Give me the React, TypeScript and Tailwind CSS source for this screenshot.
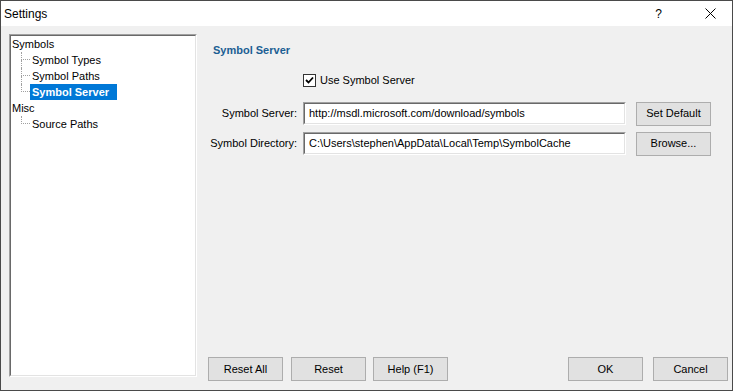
import React from "react";

const font = { fontFamily: '"Liberation Sans", Arial, sans-serif' };

function Child({ label, last, selected }: { label: string; last?: boolean; selected?: boolean }) {
  return (
    <div className="flex h-[16px] items-stretch">
      <div className="w-[10px] shrink-0" />
      <div className="flex w-[9px] shrink-0 flex-col">
        <div className="h-[8px] border-b border-l border-dotted border-[#a0a0a0]" />
        {last ? <div className="h-[8px]" /> : <div className="h-[8px] border-l border-dotted border-[#a0a0a0]" />}
      </div>
      {selected ? (
        <span className="flex h-[16px] items-center bg-[#0078d7] pl-[2px] pr-[8px] font-bold text-white">{label}</span>
      ) : (
        <span className="flex h-[16px] items-center pl-[2px]">{label}</span>
      )}
    </div>
  );
}

function Btn({ label }: { label: string }) {
  return (
    <button className="flex h-[24px] w-[75px] shrink-0 items-center justify-center border border-[#adadad] bg-[#e1e1e1] text-[11px] text-black">
      {label}
    </button>
  );
}

function Sunken({ children, className }: { children?: React.ReactNode; className: string }) {
  return (
    <div className={"border border-b-white border-l-[#a0a0a0] border-r-white border-t-[#a0a0a0] " + className}>
      <div className="h-full w-full border border-b-[#e3e3e3] border-l-[#696969] border-r-[#e3e3e3] border-t-[#696969] bg-white">
        {children}
      </div>
    </div>
  );
}

export default function App() {
  return (
    <div
      style={font}
      className="flex h-[391px] w-[733px] flex-col border border-[#4a4a4a] bg-[#f0f0f0] text-[11px] text-black"
    >
      <div className="flex h-[25px] shrink-0 items-center bg-white pl-[3px] text-[12px]">
        <span>Settings</span>
        <span className="ml-auto mr-[43px]">?</span>
        <svg width="11" height="11" viewBox="0 0 11 11" className="mr-[16px]">
          <path d="M0.5 0.5 L10.5 10.5 M10.5 0.5 L0.5 10.5" stroke="#000" strokeWidth="1" />
        </svg>
      </div>
      <div className="flex min-h-0 flex-1 pl-[8px] pt-[8px]">
        <Sunken className="mb-[13px] h-[343px] w-[188px] shrink-0">
          <div className="flex flex-col">
            <div className="flex h-[16px] items-center pl-[1px]">Symbols</div>
            <Child label="Symbol Types" />
            <Child label="Symbol Paths" />
            <Child label="Symbol Server" last selected />
            <div className="flex h-[16px] items-center pl-[1px]">Misc</div>
            <Child label="Source Paths" last />
          </div>
        </Sunken>
        <div className="flex min-w-0 flex-1 flex-col pb-[9px] pr-[4px]">
          <div className="mt-[8px] flex h-[16px] items-center pl-[16px] font-bold text-[#1b5e93]">Symbol Server</div>
          <div className="mt-[14px] flex h-[16px] items-center pl-[106px]">
            <div className="flex h-[13px] w-[13px] items-center justify-center border border-[#333] bg-white">
              <svg width="9" height="9" viewBox="0 0 9 9">
                <path d="M1 4 L3.5 6.5 L8 1.5" fill="none" stroke="#000" strokeWidth="1.8" />
              </svg>
            </div>
            <span className="ml-[4px]">Use Symbol Server</span>
          </div>
          <div className="mt-[14px] flex h-[23px] items-center">
            <div className="w-[100px] shrink-0 text-right">Symbol Server:</div>
            <Sunken className="ml-[6px] h-[23px] w-[323px] shrink-0">
              <div className="flex h-full items-center pl-[4px]">http://msdl.microsoft.com/download/symbols</div>
            </Sunken>
            <div className="ml-[10px]">
              <Btn label="Set Default" />
            </div>
          </div>
          <div className="mt-[7px] flex h-[23px] items-center">
            <div className="w-[100px] shrink-0 text-right">Symbol Directory:</div>
            <Sunken className="ml-[6px] h-[23px] w-[323px] shrink-0">
              <div className="flex h-full items-center pl-[4px]">C:\Users\stephen\AppData\Local\Temp\SymbolCache</div>
            </Sunken>
            <div className="ml-[10px]">
              <Btn label="Browse..." />
            </div>
          </div>
          <div className="mt-auto flex items-center pl-[11px]">
            <Btn label="Reset All" />
            <div className="ml-[8px]">
              <Btn label="Reset" />
            </div>
            <div className="ml-[7px]">
              <Btn label="Help (F1)" />
            </div>
            <div className="ml-auto">
              <Btn label="OK" />
            </div>
            <div className="ml-[10px]">
              <Btn label="Cancel" />
            </div>
          </div>
        </div>
      </div>
    </div>
  );
}
